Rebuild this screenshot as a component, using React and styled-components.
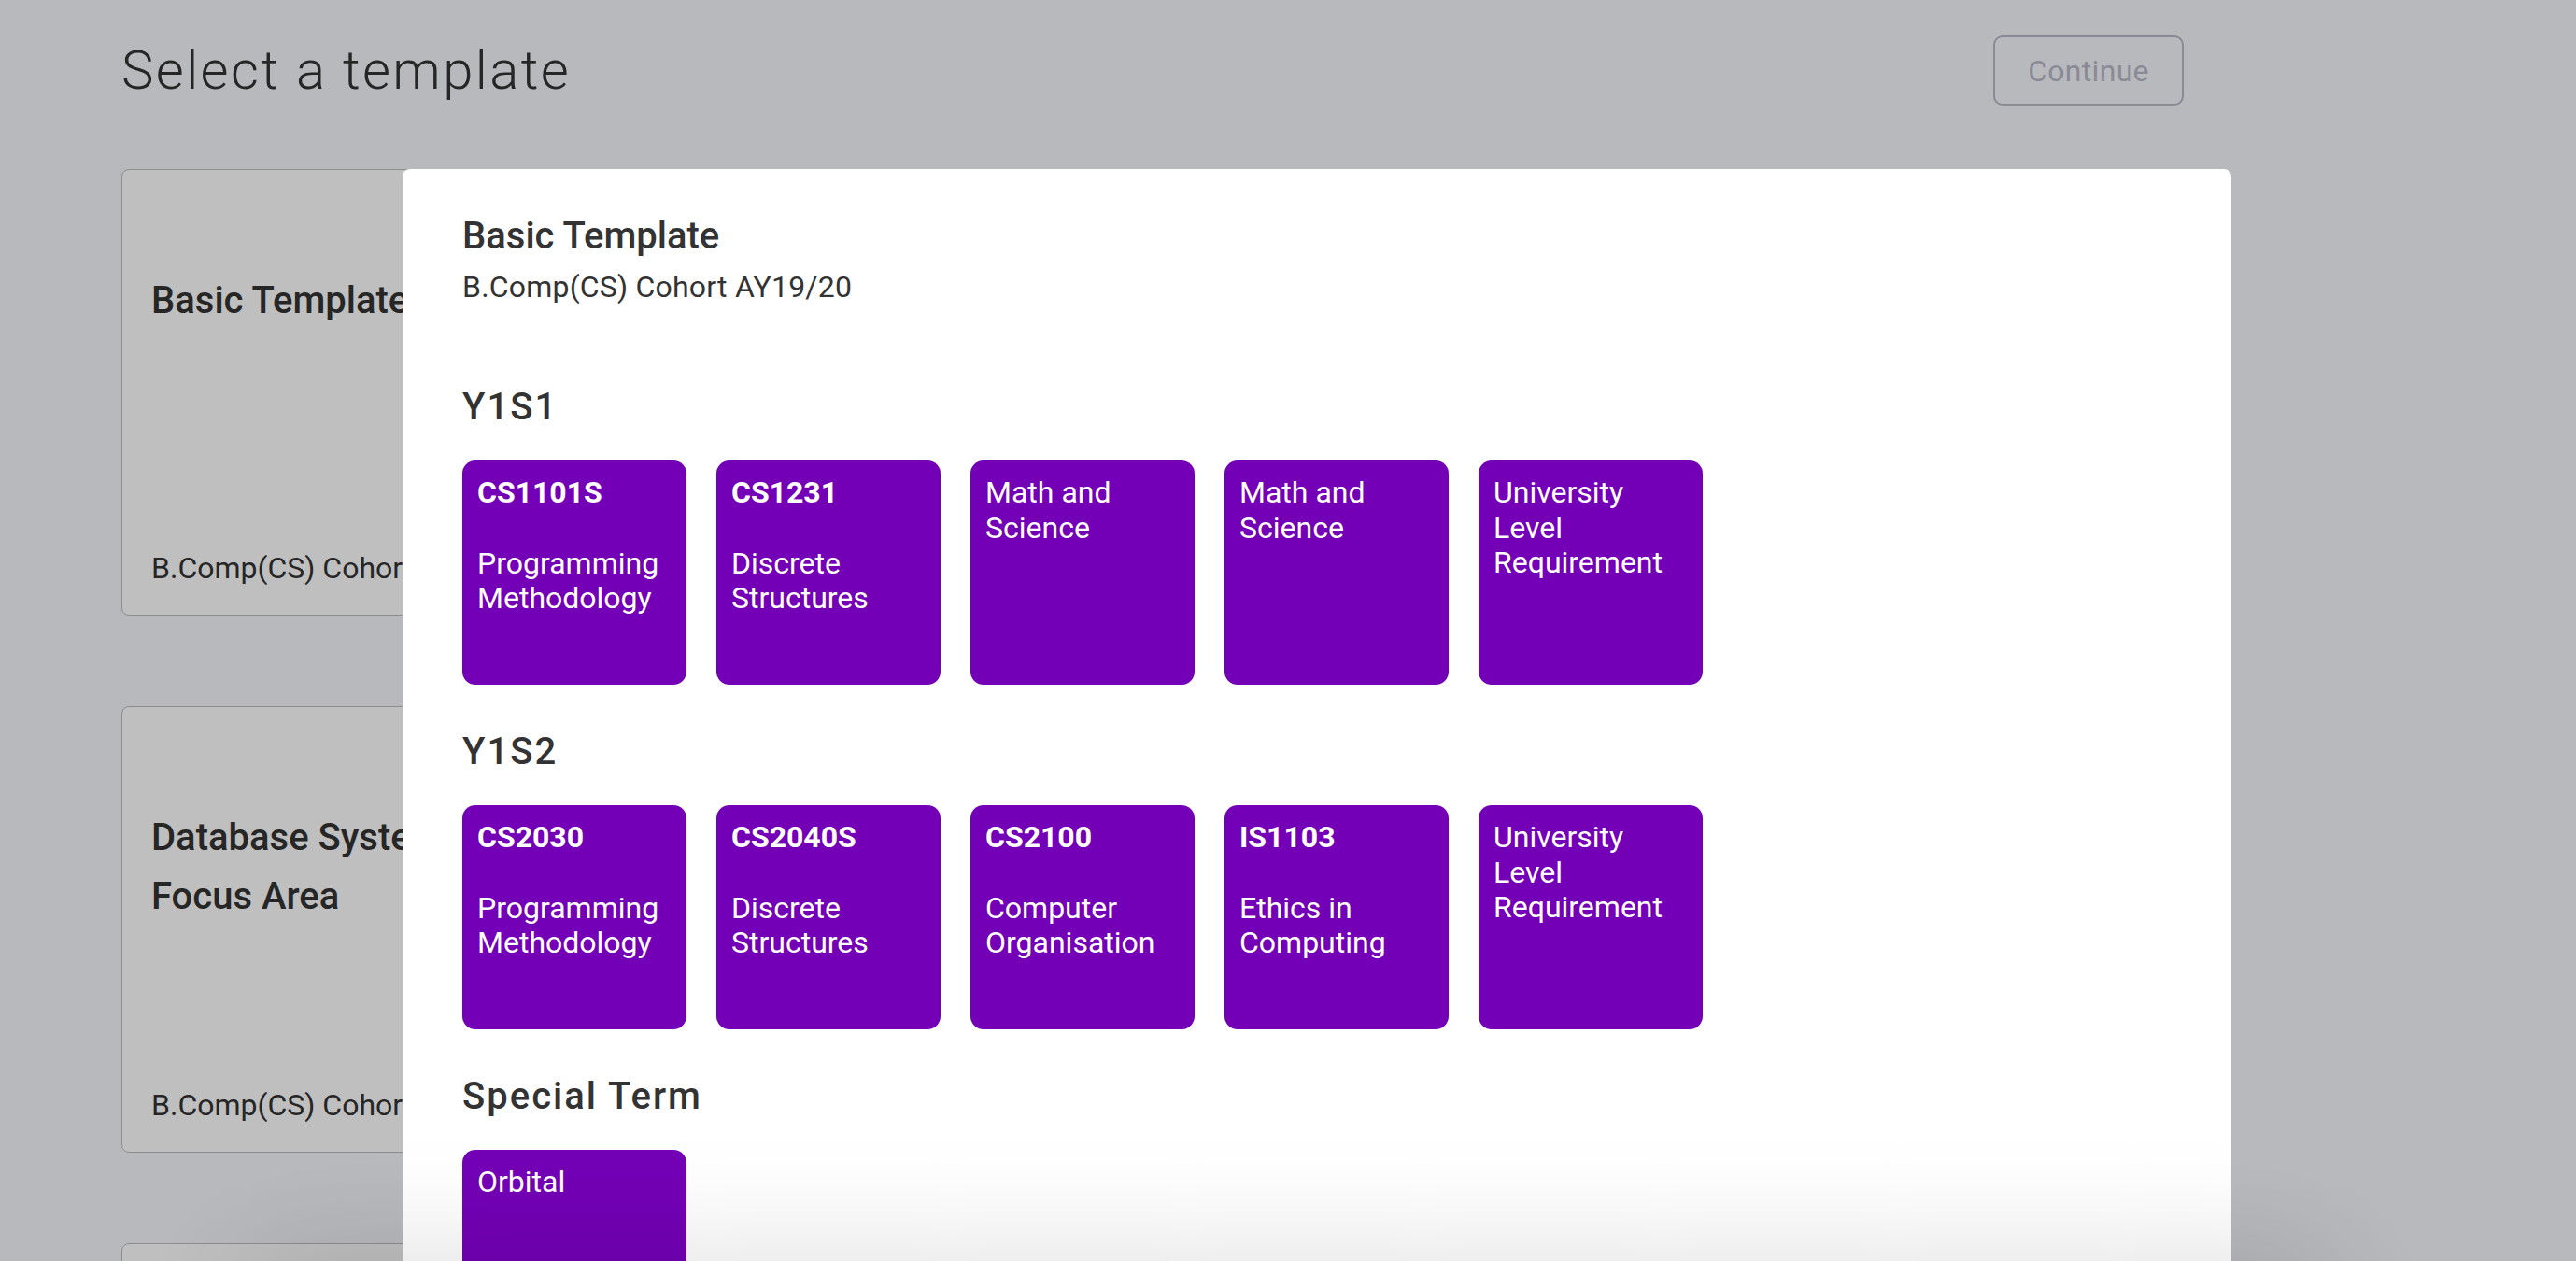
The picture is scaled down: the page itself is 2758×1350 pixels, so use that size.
import React from "react";
import styled, { createGlobalStyle } from "styled-components";

const GlobalStyle = createGlobalStyle`
  html, body {
    margin: 0;
    padding: 0;
    background: #f5f7fd;
    font-family: Roboto, "Liberation Sans", sans-serif;
    color: #333;
    overflow: hidden;
  }
  * { box-sizing: border-box; }
`;

const Page = styled.div`
  padding: 38px 0 0 130px;
  height: 100vh;
`;

const Header = styled.header`
  display: flex;
  align-items: center;
  justify-content: space-between;
  width: 2208px;
`;

const PageTitle = styled.h1`
  margin: 0;
  font-size: 58px;
  line-height: 75px;
  font-weight: 300;
  letter-spacing: 2.4px;
  color: #333;
`;

const ContinueButton = styled.button`
  width: 204px;
  height: 75px;
  border: 2px solid #b8b8c8;
  border-radius: 10px;
  background: transparent;
  color: #b8b8c8;
  font-family: Roboto, sans-serif;
  font-size: 32px;
  letter-spacing: 0.3px;
`;

const CardList = styled.div`
  margin-top: 68px;
  display: flex;
  flex-direction: column;
  gap: 97px;
`;

const TemplateCard = styled.div`
  width: 700px;
  height: 478px;
  background: #fff;
  border: 1px solid #bdbdbd;
  border-radius: 8px;
  padding: 108px 32px 26px 31px;
  display: flex;
  flex-direction: column;
  justify-content: space-between;
`;

const CardTitle = styled.div`
  font-size: 40px;
  line-height: 63px;
  font-weight: 500;
  color: #333;
`;

const CardSubtitle = styled.div`
  font-size: 32px;
  line-height: 48px;
  color: #333;
`;

const Backdrop = styled.div`
  position: fixed;
  inset: 0;
  background: rgba(0, 0, 0, 0.25);
`;

const Modal = styled.div`
  position: fixed;
  top: 181px;
  left: 431px;
  width: 1958px;
  bottom: -40px;
  background: #fff;
  border-radius: 8px 8px 0 0;
  padding: 48px 64px;
  overflow: hidden;
`;

const ModalTitle = styled.h2`
  margin: 0;
  font-size: 40px;
  line-height: 48px;
  font-weight: 500;
  color: #333;
`;

const ModalSubtitle = styled.div`
  margin-top: 6px;
  font-size: 32px;
  line-height: 48px;
  letter-spacing: 0.2px;
  color: #333;
`;

const Sections = styled.div`
  margin-top: 77px;
  display: flex;
  flex-direction: column;
  gap: 44px;
`;

const SectionTitle = styled.h3`
  margin: 0 0 29px;
  font-size: 40px;
  line-height: 56px;
  font-weight: 500;
  letter-spacing: 2px;
  color: #333;
`;

const TileRow = styled.div`
  display: flex;
  gap: 32px;
`;

const Tile = styled.div`
  width: 240px;
  height: 240px;
  flex: none;
  background: #7300b6;
  border-radius: 14px;
  padding: 16px 16px;
  color: #fff;
  display: flex;
  flex-direction: column;
`;

const TileCode = styled.div`
  font-size: 32px;
  line-height: 37.5px;
  font-weight: 700;
  margin-bottom: 38px;
`;

const TileName = styled.div`
  font-size: 32px;
  line-height: 37.5px;
  font-weight: 400;
`;

const BottomSheet = styled.div`
  position: fixed;
  top: 100%;
  left: 258px;
  right: 258px;
  height: 200px;
  background: #fff;
  box-shadow: 0 0 140px rgba(0, 0, 0, 0.14);
`;

const sections = [
  {
    title: "Y1S1",
    modules: [
      { code: "CS1101S", name: "Programming Methodology" },
      { code: "CS1231", name: "Discrete Structures" },
      { name: "Math and Science" },
      { name: "Math and Science" },
      { name: "University Level Requirement" },
    ],
  },
  {
    title: "Y1S2",
    modules: [
      { code: "CS2030", name: "Programming Methodology" },
      { code: "CS2040S", name: "Discrete Structures" },
      { code: "CS2100", name: "Computer Organisation" },
      { code: "IS1103", name: "Ethics in Computing" },
      { name: "University Level Requirement" },
    ],
  },
  {
    title: "Special Term",
    modules: [{ name: "Orbital" }],
  },
];

const templates = [
  { title: ["Basic Template"], subtitle: "B.Comp(CS) Cohort AY19/20" },
  { title: ["Database Systems", "Focus Area"], subtitle: "B.Comp(CS) Cohort AY19/20" },
  { title: ["Software Engineering", "Focus Area"], subtitle: "B.Comp(CS) Cohort AY19/20" },
];

export default function App() {
  return (
    <>
      <GlobalStyle />
      <Page>
        <Header>
          <PageTitle>Select a template</PageTitle>
          <ContinueButton disabled>Continue</ContinueButton>
        </Header>
        <CardList>
          {templates.map((t, i) => (
            <TemplateCard key={i}>
              <CardTitle>
                {t.title.map((line, j) => (
                  <div key={j}>{line}</div>
                ))}
              </CardTitle>
              <CardSubtitle>{t.subtitle}</CardSubtitle>
            </TemplateCard>
          ))}
        </CardList>
      </Page>
      <Backdrop />
      <Modal>
        <ModalTitle>Basic Template</ModalTitle>
        <ModalSubtitle>B.Comp(CS) Cohort AY19/20</ModalSubtitle>
        <Sections>
          {sections.map((s) => (
            <section key={s.title}>
              <SectionTitle>{s.title}</SectionTitle>
              <TileRow>
                {s.modules.map((m, i) => (
                  <Tile key={i}>
                    {m.code && <TileCode>{m.code}</TileCode>}
                    <TileName>{m.name}</TileName>
                  </Tile>
                ))}
              </TileRow>
            </section>
          ))}
        </Sections>
      </Modal>
      <BottomSheet />
    </>
  );
}
